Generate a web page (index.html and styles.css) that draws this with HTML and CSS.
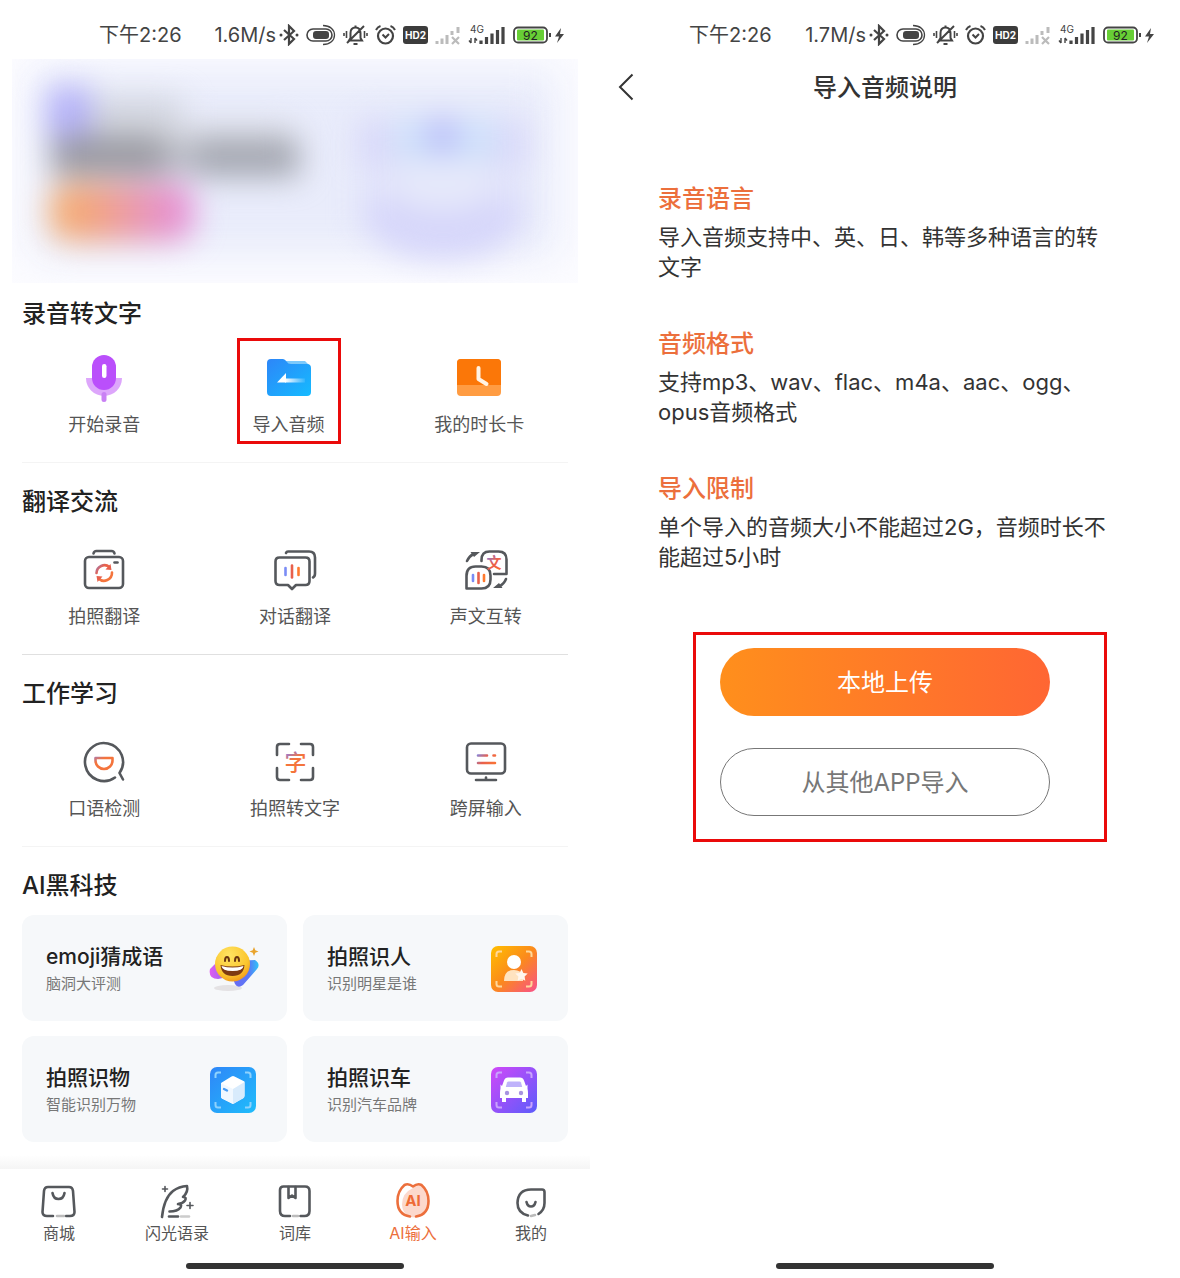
FILE: index.html
```html
<!DOCTYPE html>
<html lang="zh-CN">
<head>
    <meta charset="UTF-8">
    <meta name="viewport" content="width=device-width, initial-scale=1.0">
    <title>导入音频</title>
    <link rel="stylesheet" href="styles.css">
</head>
<body>
    <!-- shared symbols and gradients -->
    <svg class="svg-defs" width="0" height="0" aria-hidden="true">
        <defs>
            <linearGradient id="accent" gradientUnits="userSpaceOnUse" x1="14" y1="14" x2="34" y2="30">
                <stop offset="0" stop-color="#6a8dff"/>
                <stop offset="0.45" stop-color="#e8604c"/>
                <stop offset="1" stop-color="#ff7a2e"/>
            </linearGradient>
            <linearGradient id="accent-soft" gradientUnits="userSpaceOnUse" x1="14" y1="14" x2="24" y2="32">
                <stop offset="0" stop-color="#7a7dff"/>
                <stop offset="0.5" stop-color="#f4743c"/>
                <stop offset="1" stop-color="#f4743c"/>
            </linearGradient>
        </defs>
        <symbol id="i-bluetooth" viewBox="0 0 20 22">
            <path d="M5 6l10 9-5 5V2l5 5-10 9" fill="none" stroke="#444" stroke-width="2.2"/>
            <circle cx="2" cy="11" r="1.5" fill="#444"/><circle cx="18" cy="11" r="1.5" fill="#444"/>
        </symbol>
        <symbol id="i-toggle" viewBox="0 0 30 22">
            <rect x="1" y="5" width="25" height="12" rx="6" fill="none" stroke="#444" stroke-width="1.6"/>
            <rect x="7" y="7" width="16" height="8" rx="3" fill="#444"/>
            <path d="M17 1.5c7 0 11.5 4 11.5 9.5s-4.5 9.5-11.5 9.5" fill="none" stroke="#444" stroke-width="1.3"/>
        </symbol>
        <symbol id="i-mute" viewBox="0 0 25 22">
            <path d="M6 16.5h13l-1.5-2.5V9c0-3.5-2-5.5-5-5.5S7.5 5.5 7.5 9v5zM21 2L4 19M10.5 20h4M12.5 1.5v2" fill="none" stroke="#444" stroke-width="2"/>
            <path d="M3.5 7v7M1 9v3M21.5 7v7M24 9v3" stroke="#444" stroke-width="1.6"/>
        </symbol>
        <symbol id="i-alarm" viewBox="0 0 21 22">
            <circle cx="10.5" cy="12" r="7.5" fill="none" stroke="#444" stroke-width="2.2"/>
            <path d="M7.5 10.5l3 3 3.5-3.5M1 6q1.5-3 4.5-4M20 6q-1.5-3-4.5-4" fill="none" stroke="#444" stroke-width="2"/>
        </symbol>
        <symbol id="i-nosignal" viewBox="0 0 26 22">
            <path d="M2 17v3M7 14.5V20M12 11v9M17 7v4M23 3v6" stroke="#bbb" stroke-width="3"/>
            <path d="M17 13l7 7M24 13l-7 7" stroke="#bbb" stroke-width="2.2"/>
        </symbol>
    </svg>

    <div class="screens">
        <section class="screen">
            <div class="status-bar">
                <span>下午2:26</span>
                <div class="status-right">
                    <span class="net-speed">1.6M/s</span>
                    <svg width="20" height="22"><use href="#i-bluetooth"/></svg>
                    <svg width="30" height="22"><use href="#i-toggle"/></svg>
                    <svg width="25" height="22"><use href="#i-mute"/></svg>
                    <svg width="21" height="22"><use href="#i-alarm"/></svg>
                    <svg width="25" height="22" viewBox="0 0 25 22">
                        <rect x="0" y="2" width="25" height="18" rx="3" fill="#3c3c3c"/>
                        <text x="12.5" y="15" text-anchor="middle" font-size="10" font-weight="700" fill="#fff">HD2</text>
                    </svg>
                    <svg width="26" height="22"><use href="#i-nosignal"/></svg>
                    <svg width="38" height="22" viewBox="0 0 38 22">
                        <text x="2" y="9" font-size="10" fill="#444">4G</text>
                        <path d="M3 14v5M1 16.5l2 2.5M7 19v-5M9 16.5L7 14" fill="none" stroke="#444" stroke-width="1.4"/>
                        <path d="M13 16.5v3.5M18.5 13v7M24 9.5V20M29.5 6v14M35 3v17" stroke="#444" stroke-width="3.2"/>
                    </svg>
                    <svg width="53" height="22" viewBox="0 0 53 22">
                        <rect x="1" y="3.5" width="33" height="15" rx="4" fill="#fff" stroke="#444" stroke-width="1.8"/>
                        <rect x="4" y="5.5" width="27" height="11" rx="1" fill="#67cf35"/>
                        <path d="M37 9v4" stroke="#444" stroke-width="2"/>
                        <text x="17.5" y="15.5" text-anchor="middle" font-size="12" fill="#222">92</text>
                        <path d="M48 4l-6 8.5h4L44 19l7-9h-4z" fill="#444"/>
                    </svg>
                </div>
            </div>

            <div class="banner">
                <svg viewBox="0 0 567 224" preserveAspectRatio="none" aria-hidden="true">
                    <defs>
                        <filter id="blur" x="-50%" y="-100%" width="200%" height="300%" color-interpolation-filters="sRGB"><feGaussianBlur stdDeviation="15"/></filter>
                        <filter id="blur-wide" x="-50%" y="-100%" width="200%" height="300%" color-interpolation-filters="sRGB"><feGaussianBlur stdDeviation="20"/></filter>
                        <linearGradient id="pill" x1="0" x2="1">
                            <stop offset="0" stop-color="#f6b06c"/>
                            <stop offset="0.35" stop-color="#f1a286"/>
                            <stop offset="0.65" stop-color="#e896b6"/>
                            <stop offset="1" stop-color="#e58edc"/>
                        </linearGradient>
                    </defs>
                    <rect x="20" y="10" width="527" height="188" fill="#e9ecfb" filter="url(#blur-wide)"/>
                    <g filter="url(#blur)">
                        <rect x="50" y="40" width="120" height="44" fill="#d0d3dc"/>
                        <rect x="130" y="66" width="150" height="30" fill="#d8dae2"/>
                        <rect x="36" y="28" width="42" height="50" fill="#b3b0f8"/>
                        <rect x="40" y="78" width="114" height="38" fill="#97979f"/>
                        <rect x="154" y="84" width="30" height="30" fill="#b8bac4"/>
                        <rect x="184" y="80" width="104" height="38" fill="#a3a6b0"/>
                        <rect x="38" y="124" width="144" height="58" rx="20" fill="url(#pill)"/>
                    </g>
                    <g filter="url(#blur)">
                        <path d="M350 56h160v110q-20 30-79 30t-81-30z" fill="#e2e4fa"/>
                        <path d="M345 62h36v46h-36zM481 62h36v46h-36z" fill="#d9d9f9"/>
                        <path d="M384 60h100v40H384z" fill="#cfe2fb"/>
                        <circle cx="431" cy="76" r="18" fill="#b9bdf8"/>
                        <path d="M352 140h160v22q-20 38-80 38t-80-38z" fill="#d6d6fa"/>
                        <ellipse cx="431" cy="128" rx="50" ry="24" fill="#e6e9fa"/>
                    </g>
                </svg>
            </div>

            <div class="section section-first">
                <h2 class="section-title">录音转文字</h2>
                <div class="feature-grid">
                    <a class="feature" href="#record">
                        <svg width="48" height="48" viewBox="0 0 48 48">
                            <path d="M6 24h36a18 18 0 0 1-36 0z" fill="#dda6fb"/>
                            <rect x="21.5" y="38" width="5" height="10" rx="2.5" fill="#c981f4"/>
                            <rect x="12" y="1" width="24" height="35" rx="12" fill="#ba4ffb"/>
                            <rect x="22" y="10" width="4.5" height="14" rx="2.2" fill="#fff"/>
                        </svg>
                        <span>开始录音</span>
                    </a>
                    <a class="feature highlighted" href="#import">
                        <svg width="48" height="48" viewBox="0 0 48 48">
                            <defs>
                                <linearGradient id="folder" x1="0" y1="0" x2="1" y2="1">
                                    <stop offset="0" stop-color="#2d86f8"/>
                                    <stop offset="1" stop-color="#15bbff"/>
                                </linearGradient>
                                <linearGradient id="tail" x1="0" x2="1">
                                    <stop offset="0" stop-color="#fff"/>
                                    <stop offset="1" stop-color="#fff" stop-opacity="0.1"/>
                                </linearGradient>
                            </defs>
                            <path d="M20 7h20l5 5v8H20z" fill="#7cc9fb"/>
                            <path d="M6 5h12q2 0 3.5 2.5T26 10h16q4 0 4 4v24q0 4-4 4H6q-4 0-4-4V9q0-4 4-4z" fill="url(#folder)"/>
                            <path d="M12 28.5L21 19v9.5z" fill="#fff"/>
                            <rect x="20" y="24.5" width="20" height="4" fill="url(#tail)"/>
                        </svg>
                        <span>导入音频</span>
                    </a>
                    <a class="feature" href="#card">
                        <svg width="48" height="48" viewBox="0 0 48 48">
                            <rect x="2" y="5" width="44" height="37" rx="4" fill="#ff9c42"/>
                            <path d="M6 5h36q4 0 4 4v22H2V9q0-4 4-4z" fill="#fb7708"/>
                            <path d="M23.5 14v11l8 5" fill="none" stroke="#fff3e4" stroke-width="4" stroke-linecap="round" stroke-linejoin="round"/>
                        </svg>
                        <span>我的时长卡</span>
                    </a>
                </div>
            </div>

            <div class="section">
                <h2 class="section-title">翻译交流</h2>
                <div class="feature-grid">
                    <a class="feature" href="#photo-translate">
                        <svg class="line-icon" width="48" height="48" viewBox="0 0 48 48">
                            <path d="M13.5 7.5q.5-2.5 3-2.5h15q2.5 0 3 2.5"/>
                            <rect x="5" y="11" width="38" height="31" rx="4"/>
                            <path d="M34.5 16.5h3"/>
                            <path d="M16.5 27a8 8 0 0 1 13-6" stroke="url(#accent)"/>
                            <path d="M32 26.5a8 8 0 0 1-13.5 6" stroke="#f4743c"/>
                            <path d="M25.5 23.5l6 .5-1-6zM22.5 30.5l-6-.5 1 6z" fill="#e8604c" stroke="none"/>
                        </svg>
                        <span>拍照翻译</span>
                    </a>
                    <a class="feature" href="#dialog-translate">
                        <svg class="line-icon" width="48" height="48" viewBox="0 0 48 48">
                            <path d="M15 7q.5-1.5 2-1.5h21q6 0 6 6v16q0 3-2 4"/>
                            <path d="M8.5 11.5h26q4 0 4 4V35q0 4-4 4H25l-4 4-4-4H8.5q-4 0-4-4V15.5q0-4 4-4z"/>
                            <path d="M14.5 22v7" stroke="#7a8cf5"/>
                            <path d="M21 19.5v12" stroke="#e8604c"/>
                            <path d="M27.5 22v7" stroke="#ff7a2e"/>
                        </svg>
                        <span>对话翻译</span>
                    </a>
                    <a class="feature" href="#voice-text">
                        <svg class="line-icon" width="48" height="48" viewBox="0 0 48 48">
                            <defs>
                                <linearGradient id="accent-text" x1="0" y1="0" x2="1" y2="1">
                                    <stop offset="0" stop-color="#6a7dff"/>
                                    <stop offset="0.5" stop-color="#e8604c"/>
                                    <stop offset="1" stop-color="#ff6a2e"/>
                                </linearGradient>
                            </defs>
                            <path d="M19.5 15v-1q0-8.5 8-8.5h9q8 0 8 8V28H32"/>
                            <path d="M4.5 42.5V30q0-9.5 9-9.5h6q9 0 9 9v4q0 9-9 9z"/>
                            <path d="M5 15q2.5-5 7-7.5M44 33q-2 5-7 7.5"/>
                            <path d="M8.5 6H18l-6 5zM40.5 42H31l6-5z" fill="#55585c" stroke="none"/>
                            <path d="M11 29v6" stroke="#7a8cf5"/>
                            <path d="M16.5 27v10" stroke="#e8604c"/>
                            <path d="M22 29v6" stroke="#ff7a2e"/>
                            <text x="32" y="22" text-anchor="middle" font-size="15" font-weight="700" stroke="none" fill="url(#accent-text)">文</text>
                        </svg>
                        <span>声文互转</span>
                    </a>
                </div>
            </div>

            <div class="section section-light">
                <h2 class="section-title">工作学习</h2>
                <div class="feature-grid">
                    <a class="feature" href="#spoken">
                        <svg class="line-icon" width="48" height="48" viewBox="0 0 48 48">
                            <path d="M35 39.5a19 19 0 1 1 4.5-4.5l3.5 6.5"/>
                            <path d="M15.5 20h17v2.500a8.5 8.5 0 0 1-17 0z" stroke="url(#accent-soft)"/>
                        </svg>
                        <span>口语检测</span>
                    </a>
                    <a class="feature" href="#ocr">
                        <svg class="line-icon" width="48" height="48" viewBox="0 0 48 48">
                            <path d="M6 17V9q0-3 3-3h9M30 6h9q3 0 3 3v8M42 30v9q0 3-3 3h-9M18 42H9q-3 0-3-3v-9"/>
                            <text x="24.5" y="32" text-anchor="middle" font-size="22" font-weight="500" stroke="none" fill="url(#accent-soft)">字</text>
                        </svg>
                        <span>拍照转文字</span>
                    </a>
                    <a class="feature" href="#cross-screen">
                        <svg class="line-icon" width="48" height="48" viewBox="0 0 48 48">
                            <rect x="5" y="5.5" width="38" height="30" rx="4"/>
                            <path d="M14 42h20M24 39.5V42"/>
                            <path d="M16 17.5h9M31.5 17.5h1.5M16 25h17" stroke="url(#accent)"/>
                        </svg>
                        <span>跨屏输入</span>
                    </a>
                </div>
            </div>

            <div class="section section-last">
                <h2 class="section-title">AI黑科技</h2>
                <div class="card-grid">
                    <a class="card" href="#emoji">
                        <div>
                            <h3 class="card-title">emoji猜成语</h3>
                            <p class="card-desc">脑洞大评测</p>
                        </div>
                        <svg width="46" height="46" viewBox="0 0 46 46">
                            <defs>
                                <linearGradient id="ribbon" x1="0" x2="1">
                                    <stop offset="0" stop-color="#e05cf0"/>
                                    <stop offset="0.5" stop-color="#6a6cf5"/>
                                    <stop offset="0.8" stop-color="#5a78f5"/>
                                    <stop offset="1" stop-color="#2fc4f8"/>
                                </linearGradient>
                                <radialGradient id="face" cx="0.4" cy="0.25" r="0.8">
                                    <stop offset="0" stop-color="#ffe463"/>
                                    <stop offset="0.7" stop-color="#fbc52c"/>
                                    <stop offset="1" stop-color="#f0951b"/>
                                </radialGradient>
                            </defs>
                            <ellipse cx="18" cy="42" rx="14" ry="3" fill="#e4e2e4"/>
                            <path d="M7 16L0 23q-2 10 8 10l14-3 3 8q3 5 8 1l14-16q4-5-2-9z" fill="url(#ribbon)"/>
                            <circle cx="22.5" cy="18" r="17.5" fill="url(#face)"/>
                            <path d="M10.5 19q12 3 24 0-1 11-12 11t-12-11z" fill="#7d3a12"/>
                            <path d="M11.5 20q11 3 22 0-.5 5-11 5t-11-5z" fill="#fff"/>
                            <path d="M15 15q0-4 2-4t2 4M25 15q0-4 2-4t2 4" fill="none" stroke="#6b3510" stroke-width="2" stroke-linecap="round"/>
                            <path d="M44 1l1.3 3.2L48.5 5.500l-3.2 1.3L44 10l-1.3-3.2-3.2-1.3 3.2-1.3z" fill="#e9a42c"/>
                        </svg>
                    </a>
                    <a class="card" href="#face">
                        <div>
                            <h3 class="card-title">拍照识人</h3>
                            <p class="card-desc">识别明星是谁</p>
                        </div>
                        <svg width="46" height="46" viewBox="0 0 46 46">
                            <defs>
                                <linearGradient id="person-bg" x1="0" y1="0" x2="1" y2="1">
                                    <stop offset="0" stop-color="#ffbf00"/>
                                    <stop offset="0.5" stop-color="#fb8a1c"/>
                                    <stop offset="1" stop-color="#f8508a"/>
                                </linearGradient>
                            </defs>
                            <rect width="46" height="46" rx="7" fill="url(#person-bg)"/>
                            <path d="M5.5 11V8q0-2.5 2.5-2.5h3M35 5.5h3q2.5 0 2.5 2.5v3M40.5 35v3q0 2.5-2.5 2.5h-3M11 40.5H8q-2.5 0-2.5-2.5v-3" fill="none" stroke="#ffd79a" stroke-width="2"/>
                            <path d="M13 35q0-11 10-11 7 0 9 6v5z" fill="#ffe3c0"/>
                            <circle cx="23" cy="16" r="7" fill="#fff"/>
                            <path d="M30.5 23l1.9 3.9 4.3.6-3.1 3 .7 4.3-3.8-2-3.8 2 .7-4.3-3.1-3 4.3-.6z" fill="#fff6ee"/>
                        </svg>
                    </a>
                    <a class="card" href="#object">
                        <div>
                            <h3 class="card-title">拍照识物</h3>
                            <p class="card-desc">智能识别万物</p>
                        </div>
                        <svg width="46" height="46" viewBox="0 0 46 46">
                            <defs>
                                <linearGradient id="box-bg" x1="0" y1="0" x2="1" y2="1">
                                    <stop offset="0" stop-color="#2f86f8"/>
                                    <stop offset="1" stop-color="#1fbdfb"/>
                                </linearGradient>
                            </defs>
                            <rect width="46" height="46" rx="7" fill="url(#box-bg)"/>
                            <path d="M5.5 11V8q0-2.5 2.5-2.5h3M35 5.5h3q2.5 0 2.5 2.5v3M40.5 35v3q0 2.5-2.5 2.5h-3M11 40.5H8q-2.5 0-2.5-2.5v-3" fill="none" stroke="#8ed2fd" stroke-width="2"/>
                            <path d="M21.5 9.5q1.5-1 3 0l10 5v14q0 1.5-1.5 2.5L24 36.5q-1 .5-2 0l-10-5q-1-.5-1-2V16z" fill="#fff"/>
                            <path d="M11 16l12 6v15l-11-5.5q-1-.5-1-2z" fill="#f1f8ff"/>
                            <path d="M23 22l11.5-7v14q0 1.5-1.5 2.5L23 37z" fill="#d8ebfc"/>
                            <path d="M14 22l3 1.5" stroke="#4a9df5" stroke-width="2.4" stroke-linecap="round"/>
                        </svg>
                    </a>
                    <a class="card" href="#car">
                        <div>
                            <h3 class="card-title">拍照识车</h3>
                            <p class="card-desc">识别汽车品牌</p>
                        </div>
                        <svg width="46" height="46" viewBox="0 0 46 46">
                            <defs>
                                <linearGradient id="car-bg" x1="0" y1="0" x2="1" y2="1">
                                    <stop offset="0" stop-color="#d048f8"/>
                                    <stop offset="1" stop-color="#5c5cfb"/>
                                </linearGradient>
                            </defs>
                            <rect width="46" height="46" rx="7" fill="url(#car-bg)"/>
                            <path d="M5.5 11V8q0-2.5 2.5-2.5h3M35 5.5h3q2.5 0 2.5 2.5v3M40.5 35v3q0 2.5-2.5 2.5h-3M11 40.5H8q-2.5 0-2.5-2.5v-3" fill="none" stroke="#c9a2fd" stroke-width="2"/>
                            <path d="M17 10.5h12q3 0 4 3l2 5.5 1.5-1.5v4Q37 24 37 26v5h-2v4h-4v-4H15v4h-4v-4H9v-5q0-2 .5-4.5v-4L11 19l2-5.5q1-3 4-3z" fill="#fff"/>
                            <path d="M17.5 14.5h11q1 0 1.5 1l1.2 4.5H14.8l1.2-4.5q.5-1 1.5-1z" fill="#bfb2fb"/>
                            <circle cx="16" cy="26" r="2.2" fill="#a793e0"/>
                            <circle cx="30" cy="26" r="2.2" fill="#a793e0"/>
                        </svg>
                    </a>
                </div>
            </div>

            <div class="bottom">
                <nav class="tab-bar">
                    <a class="tab" href="#shop">
                        <svg class="line-icon" width="40" height="40" viewBox="0 0 40 40">
                            <path d="M14 35H8q-4.5 0-4.5-4l1.5-21q.5-4 4-4h21q3.5 0 4 4l1.5 21q0 4-4.5 4h-4"/>
                            <path d="M18 35h7" stroke="#bbb"/>
                            <path d="M13.5 12q1 6 6 6t6-6"/>
                        </svg>
                        <span>商城</span>
                    </a>
                    <a class="tab" href="#quotes">
                        <svg class="line-icon" width="40" height="40" viewBox="0 0 40 40">
                            <path d="M5 36Q7 17 16 10q6-4.5 14-5 1.5 6-4 11 4 0 2 3.5-2 3-7 3.5 4.5 0 2.5 3.5-3 4-11 4"/>
                            <path d="M12 35.5h9"/>
                            <path d="M24 35.5h8" stroke="#ccc"/>
                            <path d="M8 5.500v5M5.5 8h5M33 21.5v6M30 24.5h6" class="thin"/>
                        </svg>
                        <span>闪光语录</span>
                    </a>
                    <a class="tab" href="#dict">
                        <svg class="line-icon" width="40" height="40" viewBox="0 0 40 40">
                            <path d="M15 35h-5q-5 0-5-5V9q0-3.5 3.5-3.5H30q4.5 0 4.5 4.5v20q0 5-5 5h-4"/>
                            <path d="M18 35h5" stroke="#bbb"/>
                            <path d="M13.5 6v11l3.5-2.5 3.5 2.5V6"/>
                        </svg>
                        <span>词库</span>
                    </a>
                    <a class="tab active" href="#ai">
                        <svg class="line-icon" width="40" height="40" viewBox="0 0 40 40">
                            <path d="M20 7q5-4.5 9-2 7 6 7 15 0 16-14 16.5-12 0-13-13Q9 12 20 7z" fill="#fcd8cc" stroke="none"/>
                            <path d="M17 35.5Q4.5 33.5 4.5 20q0-10 7-16 4-2 8.5 1.5Q24.5 2 28.5 4q7 6 7 16 0 13.5-12.5 15.5"/>
                            <text x="20" y="25" text-anchor="middle" font-size="15" font-weight="700" stroke="none" fill="#ee6a35">AI</text>
                        </svg>
                        <span>AI输入</span>
                    </a>
                    <a class="tab" href="#me">
                        <svg class="line-icon" width="40" height="40" viewBox="0 0 40 40">
                            <path d="M17 34.5Q6.5 32 6.5 22 7 8.5 20 8.5h11q2.5 0 2.5 2.5v11q0 7-6 11"/>
                            <path d="M20 35l4-1" stroke="#bbb"/>
                            <path d="M15.5 21q1 4.5 4.5 4.5t4.5-4.5"/>
                        </svg>
                        <span>我的</span>
                    </a>
                </nav>
                <div class="home-indicator"></div>
            </div>
        </section>

        <section class="screen">
            <div class="status-bar">
                <span>下午2:26</span>
                <div class="status-right">
                    <span class="net-speed">1.7M/s</span>
                    <svg width="20" height="22"><use href="#i-bluetooth"/></svg>
                    <svg width="30" height="22"><use href="#i-toggle"/></svg>
                    <svg width="25" height="22"><use href="#i-mute"/></svg>
                    <svg width="21" height="22"><use href="#i-alarm"/></svg>
                    <svg width="25" height="22" viewBox="0 0 25 22">
                        <rect x="0" y="2" width="25" height="18" rx="3" fill="#3c3c3c"/>
                        <text x="12.5" y="15" text-anchor="middle" font-size="10" font-weight="700" fill="#fff">HD2</text>
                    </svg>
                    <svg width="26" height="22"><use href="#i-nosignal"/></svg>
                    <svg width="38" height="22" viewBox="0 0 38 22">
                        <text x="2" y="9" font-size="10" fill="#444">4G</text>
                        <path d="M3 14v5M1 16.5l2 2.5M7 19v-5M9 16.5L7 14" fill="none" stroke="#444" stroke-width="1.4"/>
                        <path d="M13 16.5v3.5M18.5 13v7M24 9.5V20M29.5 6v14M35 3v17" stroke="#444" stroke-width="3.2"/>
                    </svg>
                    <svg width="53" height="22" viewBox="0 0 53 22">
                        <rect x="1" y="3.5" width="33" height="15" rx="4" fill="#fff" stroke="#444" stroke-width="1.8"/>
                        <rect x="4" y="5.5" width="27" height="11" rx="1" fill="#67cf35"/>
                        <path d="M37 9v4" stroke="#444" stroke-width="2"/>
                        <text x="17.5" y="15.5" text-anchor="middle" font-size="12" fill="#222">92</text>
                        <path d="M48 4l-6 8.5h4L44 19l7-9h-4z" fill="#444"/>
                    </svg>
                </div>
            </div>

            <header class="page-header">
                <button class="back-button" type="button" aria-label="返回">
                    <svg width="16" height="28" viewBox="0 0 16 28"><path d="M14.5 1.5L2 14l12.5 12.5" fill="none" stroke="#333" stroke-width="2"/></svg>
                </button>
                <h1 class="page-title">导入音频说明</h1>
            </header>

            <div class="guide">
                <div class="guide-item">
                    <h2>录音语言</h2>
                    <p>导入音频支持中、英、日、韩等多种语言的转文字</p>
                </div>
                <div class="guide-item">
                    <h2>音频格式</h2>
                    <p>支持mp3、wav、flac、m4a、aac、ogg、opus音频格式</p>
                </div>
                <div class="guide-item">
                    <h2>导入限制</h2>
                    <p>单个导入的音频大小不能超过2G，音频时长不能超过5小时</p>
                </div>
            </div>

            <div class="actions">
                <button class="btn btn-primary" type="button">本地上传</button>
                <button class="btn btn-outline" type="button">从其他APP导入</button>
            </div>

            <div class="bottom">
                <div class="home-indicator"></div>
            </div>
        </section>
    </div>
</body>
</html>
```
FILE: styles.css
```css
:root {
    --accent: #ec6f3c;
    --highlight: #ea0a0a;
    --dark: #222;
    --text: #333;
    --gray: #555;
    --gray-mid: #777;
    --card: #f6f8fa;
}

* {
    margin: 0;
    padding: 0;
    box-sizing: border-box;
    font-family: Inter, "Noto Sans CJK SC", sans-serif;
}

body {
    background: #fff;
    color: var(--text);
}

a {
    color: inherit;
    text-decoration: none;
}

svg {
    display: block;
    flex-shrink: 0;
    overflow: visible;
}

.svg-defs {
    position: absolute;
}

.screens {
    display: flex;
    min-height: 100vh;
}

.screen {
    flex: 1;
    min-width: 0;
    display: flex;
    flex-direction: column;
}

/* status bar */
.status-bar {
    height: 59px;
    padding: 10px 24px 0 99px;
    display: flex;
    align-items: center;
    justify-content: space-between;
    font-size: 20px;
    line-height: 28px;
    color: #444;
    white-space: nowrap;
}

.status-right {
    display: flex;
    align-items: center;
    gap: 7px;
}

.net-speed {
    margin-right: -4px;
}

/* left screen */
.banner {
    height: 224px;
    margin: 0 12px;
    background: #fcfcff;
    overflow: hidden;
}

.banner svg {
    width: 100%;
    height: 100%;
}

.section {
    margin: 0 22px;
    padding: 23px 0 25px;
    border-bottom: 1px solid #e0e0e0;
}

.section-first {
    padding-top: 15px;
    border-color: #f4f4f4;
}

.section-light {
    border-color: #f4f4f4;
}

.section-last {
    border-bottom: none;
}

.section-title {
    font-size: 24px;
    line-height: 32px;
    font-weight: 500;
    color: var(--dark);
}

.feature-grid {
    display: grid;
    grid-template-columns: repeat(3, 1fr);
    justify-items: center;
    margin: 28px -13px 0;
}

.section-first .feature-grid {
    grid-template-columns: 191fr 178fr 204fr;
    margin-top: 24px;
}

.feature {
    display: flex;
    flex-direction: column;
    align-items: center;
    gap: 11px;
    font-size: 18px;
    line-height: 24px;
    color: var(--gray);
}

.highlighted {
    position: relative;
}

.highlighted::after {
    content: "";
    position: absolute;
    inset: -16px -16px -7px;
    border: 3px solid var(--highlight);
}

.line-icon {
    fill: none;
    stroke: #55585c;
    stroke-width: 2.6;
    stroke-linecap: round;
    stroke-linejoin: round;
}

.line-icon .thin {
    stroke-width: 1.6;
}

.card-grid {
    display: grid;
    grid-template-columns: 1fr 1fr;
    gap: 15px 16px;
    margin-top: 13px;
}

.card {
    display: flex;
    align-items: center;
    justify-content: space-between;
    padding: 27px 31px 25px 24px;
    border-radius: 12px;
    background: var(--card);
}

.card-title {
    font-size: 21px;
    line-height: 30px;
    font-weight: 500;
    color: var(--dark);
}

.card-desc {
    font-size: 15px;
    line-height: 24px;
    color: var(--gray-mid);
}

/* bottom tab bar */
.bottom {
    position: relative;
    margin-top: auto;
    padding-bottom: 9px;
}

.tab-bar {
    display: grid;
    grid-template-columns: repeat(5, 1fr);
    padding: 12px 0 19px;
}

.tab-bar::before {
    content: "";
    position: absolute;
    bottom: 100%;
    left: 0;
    right: 0;
    height: 14px;
    background: linear-gradient(rgba(245, 245, 245, 0), #f5f5f5);
}

.tab {
    display: flex;
    flex-direction: column;
    align-items: center;
    gap: 1px;
    font-size: 16px;
    line-height: 22px;
    color: var(--gray);
}

.tab.active {
    color: var(--accent);
}

.tab.active .line-icon {
    stroke: var(--accent);
}

.home-indicator {
    width: 37%;
    height: 6px;
    margin: 0 auto;
    border-radius: 3px;
    background: #333;
}

/* right screen */
.page-header {
    display: grid;
    grid-template-columns: 1fr auto 1fr;
    align-items: center;
    height: 56px;
    padding: 0 28px;
}

.back-button {
    justify-self: start;
    border: none;
    background: none;
    cursor: pointer;
}

.page-title {
    padding-top: 2px;
    font-size: 24px;
    line-height: 32px;
    font-weight: 500;
}

.guide {
    padding: 68px 66px 0 68px;
}

.guide-item {
    margin-bottom: 46px;
}

.guide-item:last-child {
    margin-bottom: 60px;
}

.guide-item h2 {
    margin-bottom: 7px;
    font-size: 24px;
    line-height: 32px;
    font-weight: 500;
    color: var(--accent);
}

.guide-item p {
    font-size: 22px;
    line-height: 30px;
}

.actions {
    display: flex;
    flex-direction: column;
    gap: 32px;
    margin: 0 73px 0 103px;
    padding: 13px 54px 23px 24px;
    border: 3px solid var(--highlight);
}

.btn {
    height: 68px;
    padding-bottom: 4px;
    border: none;
    border-radius: 34px;
    font-size: 24px;
    cursor: pointer;
}

.btn-primary {
    color: #fff;
    background: linear-gradient(90deg, #ff8f1c, #ff6633);
}

.btn-outline {
    color: var(--gray-mid);
    background: #fff;
    border: 1px solid #777;
}
```
